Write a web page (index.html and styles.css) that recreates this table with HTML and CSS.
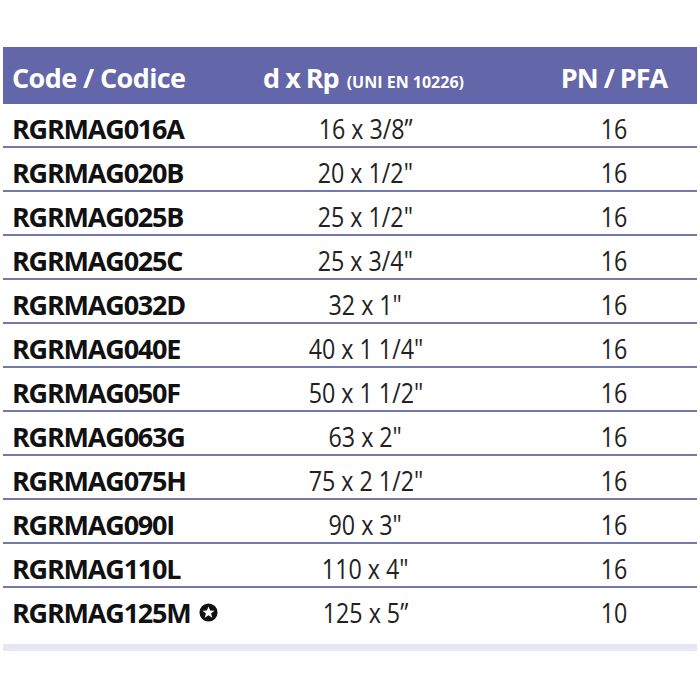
FILE: index.html
```html
<!DOCTYPE html>
<html>
<head>
<meta charset="utf-8">
<link rel="stylesheet" href="styles.css">
</head>
<body>
<div class="table">
  <div class="head">
    <div class="c1">Code / Codice</div>
    <div class="c2">d x Rp <span class="small">(UNI EN 10226)</span></div>
    <div class="c3">PN / PFA</div>
  </div>
  <div class="row"><div class="c1">RGRMAG016A</div><div class="c2"><span class="t">16 x 3/8”</span></div><div class="c3"><span class="t">16</span></div></div>
  <div class="row"><div class="c1">RGRMAG020B</div><div class="c2"><span class="t">20 x 1/2"</span></div><div class="c3"><span class="t">16</span></div></div>
  <div class="row"><div class="c1">RGRMAG025B</div><div class="c2"><span class="t">25 x 1/2"</span></div><div class="c3"><span class="t">16</span></div></div>
  <div class="row"><div class="c1">RGRMAG025C</div><div class="c2"><span class="t">25 x 3/4"</span></div><div class="c3"><span class="t">16</span></div></div>
  <div class="row"><div class="c1">RGRMAG032D</div><div class="c2"><span class="t">32 x 1"</span></div><div class="c3"><span class="t">16</span></div></div>
  <div class="row"><div class="c1">RGRMAG040E</div><div class="c2"><span class="t">40 x 1 1/4"</span></div><div class="c3"><span class="t">16</span></div></div>
  <div class="row"><div class="c1">RGRMAG050F</div><div class="c2"><span class="t">50 x 1 1/2"</span></div><div class="c3"><span class="t">16</span></div></div>
  <div class="row"><div class="c1">RGRMAG063G</div><div class="c2"><span class="t">63 x 2"</span></div><div class="c3"><span class="t">16</span></div></div>
  <div class="row"><div class="c1">RGRMAG075H</div><div class="c2"><span class="t">75 x 2 1/2"</span></div><div class="c3"><span class="t">16</span></div></div>
  <div class="row"><div class="c1">RGRMAG090I</div><div class="c2"><span class="t">90 x 3"</span></div><div class="c3"><span class="t">16</span></div></div>
  <div class="row"><div class="c1">RGRMAG110L</div><div class="c2"><span class="t">110 x 4"</span></div><div class="c3"><span class="t">16</span></div></div>
  <div class="row last"><div class="c1">RGRMAG125M <svg class="star" viewBox="0 0 20 20" width="19" height="19"><circle cx="10" cy="10" r="9.5" fill="#111"/><polygon fill="#fff" points="10,3.6 11.7,8 16.3,8.1 12.7,11 14,15.5 10,12.9 6,15.5 7.3,11 3.7,8.1 8.3,8"/></svg></div><div class="c2"><span class="t">125 x 5”</span></div><div class="c3"><span class="t">10</span></div></div>
  <div class="foot"></div>
</div>
</body>
</html>
```
FILE: styles.css
```css
html, body {
  margin: 0;
  padding: 0;
  background: #fff;
}
.table {
  margin: 47px 3px 0 3px;
  font-family: "Open Sans", "Liberation Sans", sans-serif;
}
.head, .row {
  display: grid;
  grid-template-columns: 259px 207px 1fr;
  align-items: center;
}
.head {
  background: #6366a8;
  color: #fff;
  font-weight: 700;
  font-size: 27px;
  height: 54px;
  padding-top: 3px;
  letter-spacing: -1px;
}
.head .c1 {
  padding-left: 9px;
  letter-spacing: -0.6px;
}
.c2 {
  text-align: center;
  white-space: nowrap;
}
.head .c2 {
  padding-right: 4px;
}
.c3 {
  text-align: center;
  padding-left: 62px;
}
.small {
  font-size: 16px;
  letter-spacing: 0;
  margin-left: 2px;
}
.row {
  border-bottom: 2px solid #7479ab;
  padding-top: 5px;
  height: 37px;
  color: #111;
}
.row .c1 {
  padding-left: 9px;
  font-weight: 700;
  font-size: 27px;
  letter-spacing: -1.2px;
  display: flex;
  align-items: center;
  gap: 8px;
}
.row .c2, .row .c3 {
  font-size: 28px;
  font-weight: 400;
  color: #222;
}
.t {
  display: inline-block;
  transform: scaleX(0.83);
  transform-origin: center;
}
.row.last {
  border-bottom: none;
}
.star {
  display: block;
}
.foot {
  margin-top: 14px;
  height: 7px;
  background: #e6e6f5;
}
```
